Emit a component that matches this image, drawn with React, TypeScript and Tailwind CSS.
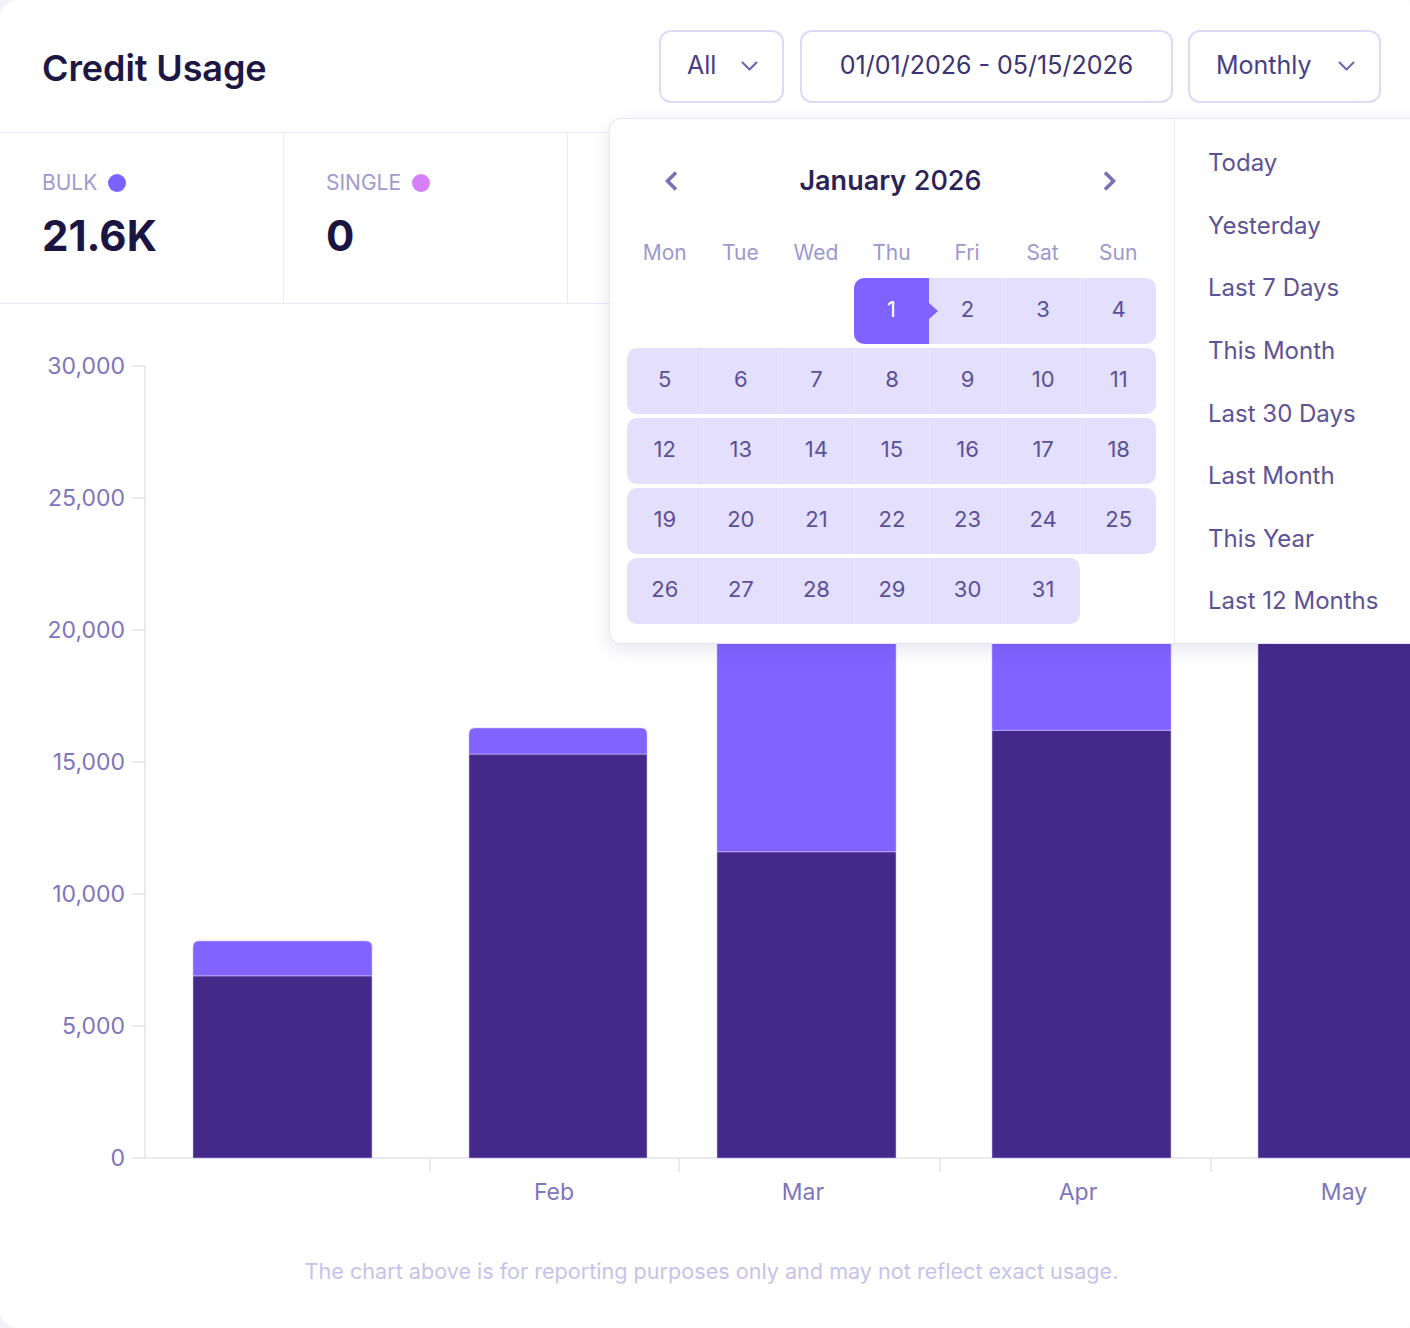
import React from "react";

const BAR_DARK = "#45298a";
const BAR_LIGHT = "#8163ff";
const AXIS = "#e4e3ea";

function ChevronDown() {
  return (
    <svg width="17" height="10" viewBox="0 0 17 10" fill="none" aria-hidden>
      <path d="M1.5 1.5l7 7 7-7" stroke="#6d62ad" strokeWidth="2" strokeLinecap="round" strokeLinejoin="round" />
    </svg>
  );
}

function NavChevron({ dir }: { dir: "left" | "right" }) {
  const d = dir === "left" ? "M12 1.5L3.5 10l8.5 8.5" : "M2 1.5L10.5 10 2 18.5";
  return (
    <svg width="14" height="20" viewBox="0 0 14 20" fill="none" aria-hidden>
      <path d={d} stroke="#7b71b6" strokeWidth="3.6" strokeLinejoin="miter" />
    </svg>
  );
}

function Header() {
  return (
    <div className="flex h-[133px] items-center justify-between border-b border-[#ebe9f8] px-[42px]">
      <h1 className="mt-[4px] text-[36px] font-semibold leading-none tracking-[-0.1px] text-[#1c1743]">Credit Usage</h1>
      <div className="flex items-center">
        <button className="flex h-[73px] w-[125px] items-center justify-between rounded-[12px] border-2 border-[#dedaf5] bg-white pl-[26px] pr-[24px] text-[25px] text-[#473e84]">
          <span>All</span>
          <ChevronDown />
        </button>
        <button className="ml-[16px] flex h-[73px] w-[373px] items-center justify-center rounded-[12px] border-2 border-[#dedaf5] bg-white text-[25px] text-[#3b3372]">
          01/01/2026 - 05/15/2026
        </button>
        <button className="ml-[15px] flex h-[73px] w-[193px] items-center justify-between rounded-[12px] border-2 border-[#dedaf5] bg-white pl-[26px] pr-[24px] text-[25px] text-[#473e84]">
          <span>Monthly</span>
          <ChevronDown />
        </button>
      </div>
    </div>
  );
}

const stats = [
  { label: "BULK", value: "21.6K", dot: "bg-[#7b61ff]" },
  { label: "SINGLE", value: "0", dot: "bg-[#d77ff8]" },
  { label: "", value: "", dot: "" },
  { label: "", value: "", dot: "" },
  { label: "", value: "", dot: "" },
];

function Stats() {
  return (
    <div className="flex h-[171px] border-b border-[#ebe9f8]">
      {stats.map((s, i) => (
        <div key={i} className="h-full w-[284px] shrink-0 border-r border-[#ebe9f8] pl-[42px] pt-[36px]">
          {s.label && (
            <>
              <div className="flex h-[28px] items-center gap-[11px] text-[21px] text-[#a09ad0]">
                <span>{s.label}</span>
                {s.dot && <span className={`h-[18px] w-[18px] rounded-full ${s.dot}`} />}
              </div>
              <div className="mt-[13px] text-[42px] font-bold leading-[52px] text-[#1b1541]">{s.value}</div>
            </>
          )}
        </div>
      ))}
    </div>
  );
}

const Y0 = 1158;
const PX_PER_UNIT = 132 / 5000;
const yOf = (v: number) => Y0 - v * PX_PER_UNIT;

const bars = [
  { x: 193, w: 179, bulk: 6900, single: 1320 },
  { x: 469, w: 178, bulk: 15300, single: 990 },
  { x: 717, w: 179, bulk: 11600, single: 15800 },
  { x: 992, w: 179, bulk: 16200, single: 7100 },
  { x: 1258, w: 179, bulk: 25000, single: 1100 },
];

function topRounded(x: number, y: number, w: number, h: number, r: number) {
  return `M${x} ${y + h} V${y + r} Q${x} ${y} ${x + r} ${y} H${x + w - r} Q${x + w} ${y} ${x + w} ${y + r} V${y + h} Z`;
}

function Chart() {
  const ticks = [30000, 25000, 20000, 15000, 10000, 5000, 0];
  const months = [
    { label: "Feb", x: 554 },
    { label: "Mar", x: 803 },
    { label: "Apr", x: 1078 },
    { label: "May", x: 1344 },
  ];
  return (
    <svg width="1423" height="926" viewBox="0 304 1423 926" className="block" fontFamily="Inter, sans-serif">
      <line x1="145" y1={yOf(30000)} x2="145" y2={Y0} stroke={AXIS} strokeWidth="1.5" />
      <line x1="145" y1={Y0} x2="1423" y2={Y0} stroke={AXIS} strokeWidth="1.5" />
      {ticks.map((t) => (
        <g key={t}>
          <line x1="131" x2="145" y1={yOf(t)} y2={yOf(t)} stroke={AXIS} strokeWidth="1.5" />
          <text x="125" y={yOf(t)} textAnchor="end" dominantBaseline="central" fontSize="23" fill="#7f74be">
            {t.toLocaleString("en-US")}
          </text>
        </g>
      ))}
      {[430, 679, 940, 1211].map((x) => (
        <line key={x} x1={x} x2={x} y1={Y0} y2={Y0 + 14} stroke={AXIS} strokeWidth="1.5" />
      ))}
      {bars.map((b, i) => {
        const darkTop = yOf(b.bulk);
        const lightTop = yOf(b.bulk + b.single);
        return (
          <g key={i}>
            <rect x={b.x} y={darkTop} width={b.w} height={Y0 - darkTop} fill={BAR_DARK} stroke="#c9bff7" strokeOpacity="0.55" strokeWidth="1" />
            <path d={topRounded(b.x, lightTop, b.w, darkTop - lightTop, 6)} fill={BAR_LIGHT} stroke="#c9bff7" strokeOpacity="0.55" strokeWidth="1" />
          </g>
        );
      })}
      {months.map((m) => (
        <text key={m.label} x={m.x} y="1192" textAnchor="middle" dominantBaseline="central" fontSize="23" fill="#7f74be">
          {m.label}
        </text>
      ))}
    </svg>
  );
}

const weekdays = ["Mon", "Tue", "Wed", "Thu", "Fri", "Sat", "Sun"];
const weeks: (number | null)[][] = [
  [null, null, null, 1, 2, 3, 4],
  [5, 6, 7, 8, 9, 10, 11],
  [12, 13, 14, 15, 16, 17, 18],
  [19, 20, 21, 22, 23, 24, 25],
  [26, 27, 28, 29, 30, 31, null],
];
const presets = ["Today", "Yesterday", "Last 7 Days", "This Month", "Last 30 Days", "Last Month", "This Year", "Last 12 Months"];

function Calendar() {
  return (
    <div className="w-[565px] shrink-0 border-r border-[#ebe9f8] pl-[17px] pr-[18px] pt-[33px]">
      <div className="flex h-[58px] items-center justify-between pl-[37px] pr-[39px]">
        <button className="flex h-[30px] w-[14px] items-center justify-center">
          <NavChevron dir="left" />
        </button>
        <div className="text-[27px] text-[#2a2356]">
          <span className="font-semibold">January</span> <span className="font-medium">2026</span>
        </div>
        <button className="flex h-[30px] w-[14px] items-center justify-center">
          <NavChevron dir="right" />
        </button>
      </div>
      <div className="mt-[28px] grid h-[30px] grid-cols-7 items-center text-center text-[21px] leading-[30px] text-[#9e97cd]">
        {weekdays.map((d) => (
          <div key={d}>{d}</div>
        ))}
      </div>
      <div className="mt-[10px] flex flex-col gap-[4px]">
        {weeks.map((week, wi) => {
          const first = week.findIndex((d) => d !== null);
          let last = -1;
          week.forEach((d, i) => {
            if (d !== null) last = i;
          });
          return (
            <div key={wi} className="grid h-[66px] grid-cols-7">
              {week.map((d, di) => {
                if (d === null) return <div key={di} />;
                const isStart = d === 1;
                const roundL = di === first ? "rounded-l-[10px]" : "border-l border-[#e9e6fd]";
                const roundR = di === last ? "rounded-r-[10px]" : "";
                const bg = isStart ? "bg-[#7f62ff] text-white" : "bg-[#e3dffd] text-[#5b4f95]";
                return (
                  <div key={di} className={`relative flex items-center justify-center pb-[4px] text-[22px] ${bg} ${roundL} ${roundR}`}>
                    {d}
                    {isStart && (
                      <span className="absolute right-[-9px] top-1/2 z-10 h-0 w-0 -translate-y-1/2 border-y-[8px] border-l-[9px] border-y-transparent border-l-[#7f62ff]" />
                    )}
                  </div>
                );
              })}
            </div>
          );
        })}
      </div>
    </div>
  );
}

function DatePopover() {
  return (
    <div className="absolute left-[609px] top-[118px] z-20 flex h-[526px] w-[830px] rounded-[12px] border border-[#e7e4f8] bg-white shadow-[0_6px_18px_rgba(60,50,120,0.12)]">
      <Calendar />
      <div className="flex flex-col pl-[33px] pt-[13px]">
        {presets.map((p) => (
          <div key={p} className="flex h-[62.6px] items-center text-[24px] text-[#5d5296]">
            {p}
          </div>
        ))}
      </div>
    </div>
  );
}

export default function App() {
  return (
    <div className="h-[1328px] w-[1410px] overflow-hidden bg-[#f4f3f9] font-[Inter,sans-serif]">
      <div className="relative h-[1328px] w-[1423px] rounded-[18px] bg-white">
        <Header />
        <Stats />
        <Chart />
        <p className="mt-[27px] text-center text-[21.6px] leading-[28px] text-[#c7c2ea]">
          The chart above is for reporting purposes only and may not reflect exact usage.
        </p>
        <DatePopover />
      </div>
    </div>
  );
}
